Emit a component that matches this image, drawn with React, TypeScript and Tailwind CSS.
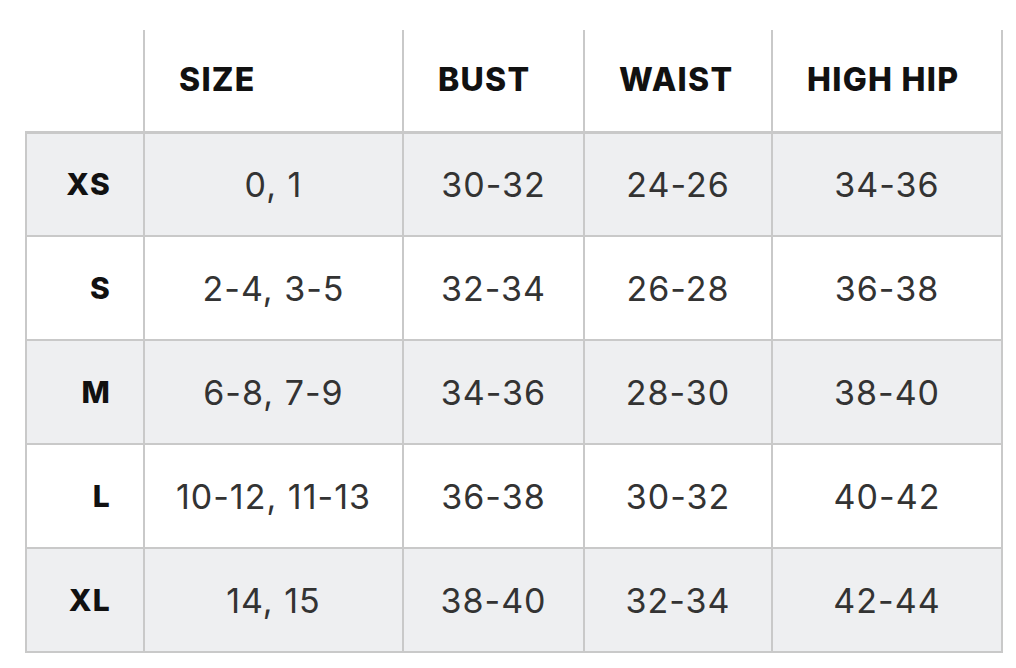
const headers = ["SIZE", "BUST", "WAIST", "HIGH HIP"];

const rows = [
  { label: "XS", values: ["0, 1", "30-32", "24-26", "34-36"] },
  { label: "S", values: ["2-4, 3-5", "32-34", "26-28", "36-38"] },
  { label: "M", values: ["6-8, 7-9", "34-36", "28-30", "38-40"] },
  { label: "L", values: ["10-12, 11-13", "36-38", "30-32", "40-42"] },
  { label: "XL", values: ["14, 15", "38-40", "32-34", "42-44"] },
];

export default function App() {
  return (
    <div className="w-[1016px] h-[668px] bg-white pt-[30px] pl-[25px] font-['Inter',sans-serif]">
      <table className="table-fixed border-collapse w-[976px]">
        <colgroup>
          <col className="w-[118px]" />
          <col className="w-[259px]" />
          <col className="w-[181px]" />
          <col className="w-[188px]" />
          <col className="w-[230px]" />
        </colgroup>
        <thead>
          <tr className="h-[102px]">
            <th className="border-b-[3px] border-[#c9c9c9]" />
            {headers.map((h) => (
              <th
                key={h}
                className="border-x-2 border-b-[3px] border-[#c9c9c9] pl-[34px] text-left text-[32px] font-extrabold text-[#111111] tracking-[0.04em]"
              >
                {h}
              </th>
            ))}
          </tr>
        </thead>
        <tbody>
          {rows.map((r, i) => (
            <tr
              key={r.label}
              className={`h-[104px] ${i % 2 === 0 ? "bg-[#eeeff1]" : "bg-white"}`}
            >
              <td className="border-2 border-[#c9c9c9] pr-[32px] text-right text-[30px] font-extrabold text-[#111111] tracking-[0.04em]">
                {r.label}
              </td>
              {r.values.map((v, j) => (
                <td
                  key={j}
                  className="border-2 border-[#c9c9c9] text-center text-[34px] text-[#333333] tracking-[0.03em]"
                >
                  {v}
                </td>
              ))}
            </tr>
          ))}
        </tbody>
      </table>
    </div>
  );
}
